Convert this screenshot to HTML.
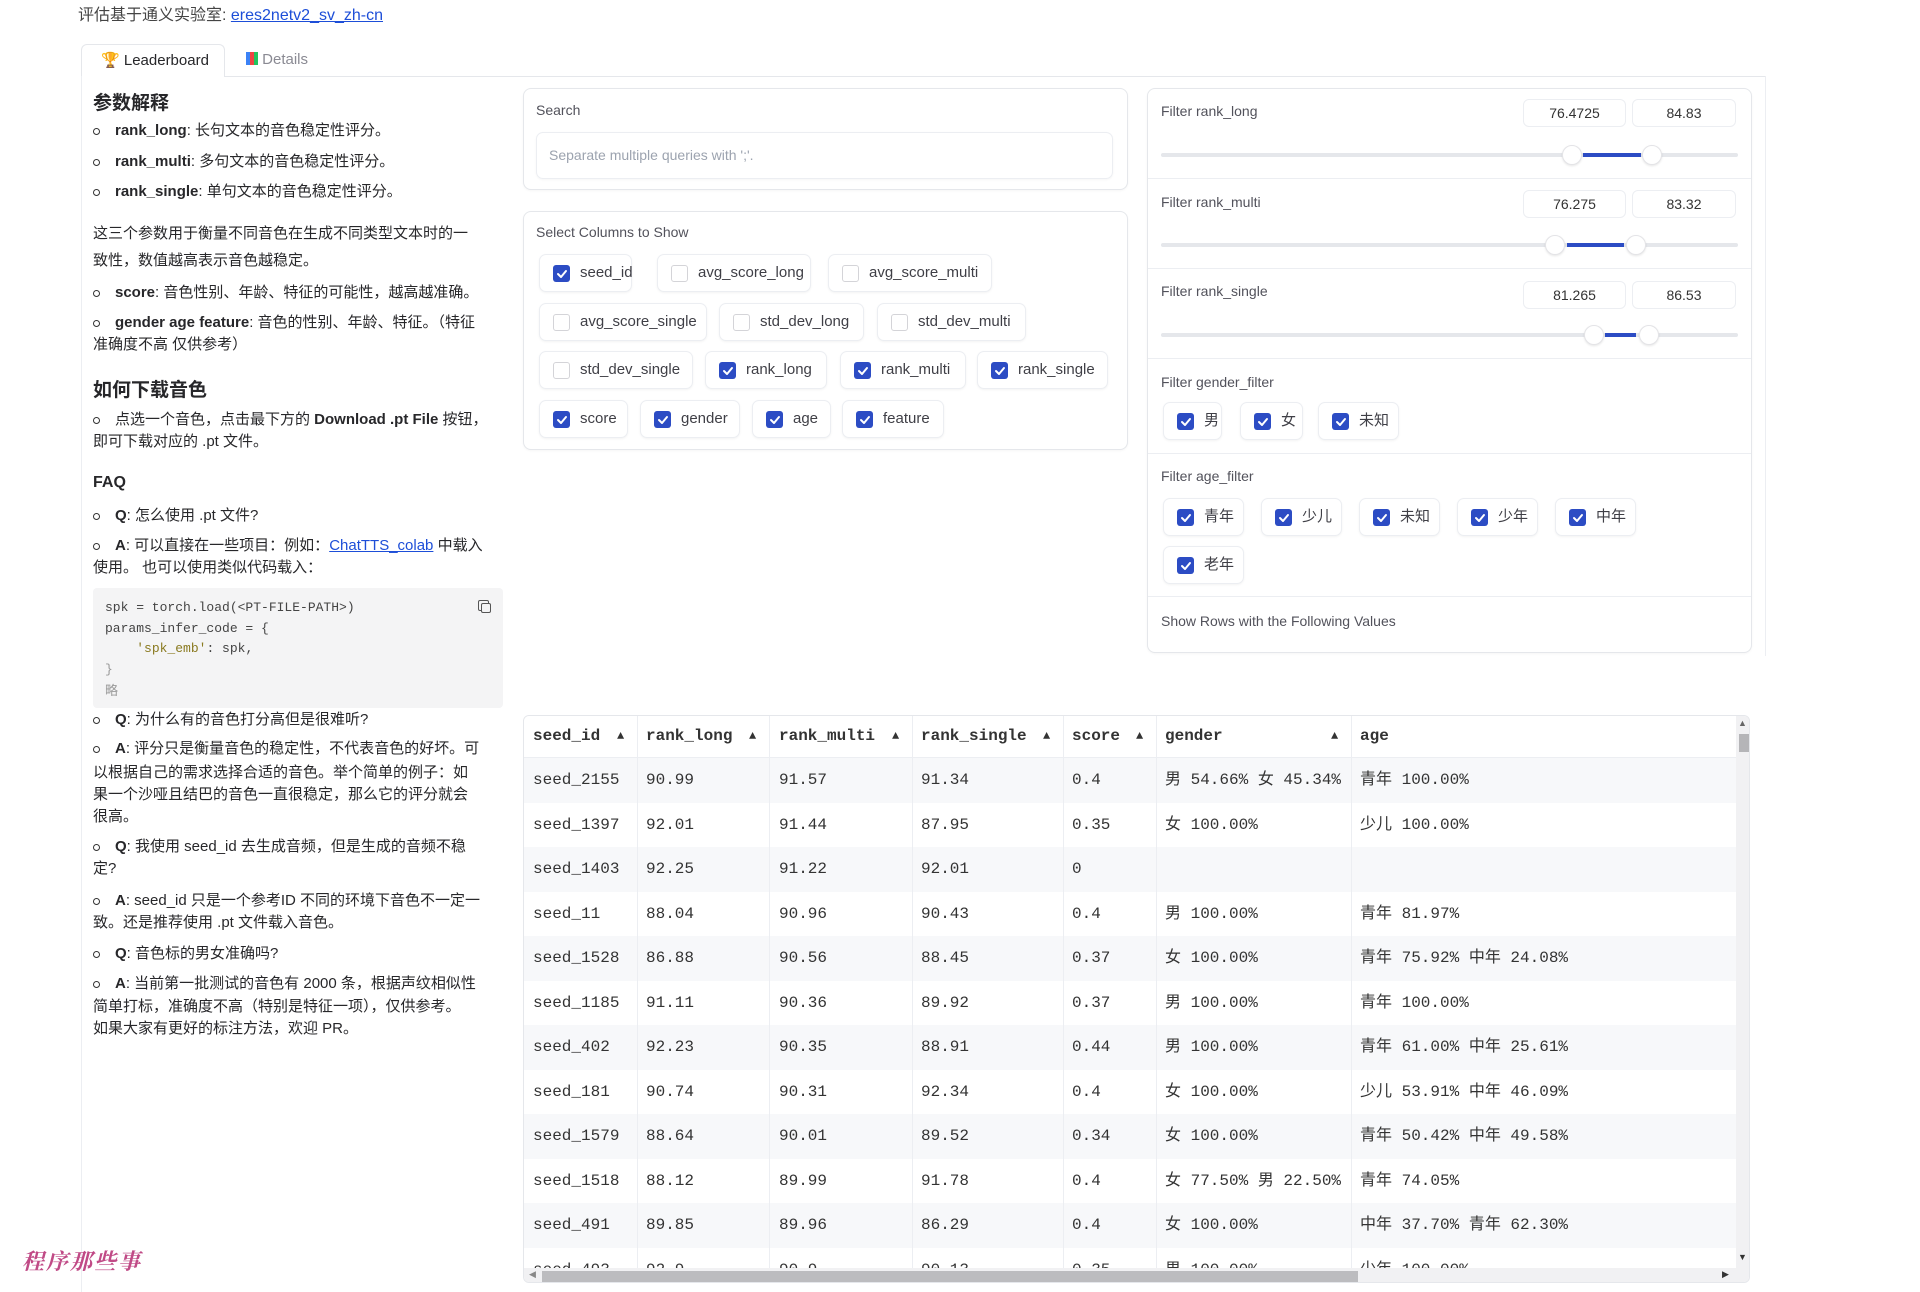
<!DOCTYPE html>
<html><head><meta charset="utf-8"><style>
*{box-sizing:border-box;margin:0;padding:0}
body{width:1920px;height:1292px;background:#fff;position:relative;overflow:hidden;font-family:"Liberation Sans","Noto Sans CJK SC",sans-serif;color:#27272a}
.a{position:absolute;white-space:nowrap}
.t{font-size:15px;line-height:20px}
.b{font-weight:bold}
.bul{position:absolute;width:7px;height:7px;border:1.5px solid #333;border-radius:50%}
a{color:#1d4ed8;text-decoration:underline}
.panel{position:absolute;border:1px solid #e5e7eb;border-radius:8px;background:#fff;box-shadow:0 1px 2px rgba(0,0,0,.04)}
.lbl{font-size:14px;color:#52525b}
.chip{position:absolute;height:38px;border:1px solid #eceef2;border-radius:7px;background:#fff;box-shadow:0 1px 2px rgba(0,0,0,.05);font-size:15px;color:#3f3f46;line-height:36px;padding-left:40px}
.cb{position:absolute;left:13px;top:10px;width:17px;height:17px;border-radius:3px;background:#2c4cc4}
.cb svg{position:absolute;left:2px;top:2px}
.cb.u{background:#fff;border:1px solid #d4d4d8}
.num{position:absolute;height:28px;border:1px solid #eceef2;border-radius:6px;font-size:14px;text-align:center;line-height:26px;color:#333;background:#fff}
.track{position:absolute;height:4px;background:#e5e7eb;border-radius:2px}
.fill{position:absolute;height:4px;background:#2c4cc4}
.hd{position:absolute;width:20px;height:20px;border-radius:50%;background:#fff;border:1px solid #e4e4e7;box-shadow:0 1px 2px rgba(0,0,0,.1)}
.tbl{position:absolute;left:523px;top:715px;width:1227px;height:568px;border:1px solid #e5e7eb;border-radius:6px;overflow:hidden;font-family:"Liberation Mono","Noto Sans CJK SC",monospace;font-size:16px}
.row{position:absolute;left:0;width:1212px;height:44.5px}
.row span{position:absolute;top:12px;height:20px;line-height:20px;white-space:nowrap;color:#333;overflow:visible}
.sep{position:absolute;top:0;width:1px;height:568px;background:#eceef2}
.arr{color:#a1a1aa;font-size:12px}
</style></head><body>

<div class="a" style="left:78px;top:1px;font-size:16px;color:#444">评估基于通义实验室: <a>eres2netv2_sv_zh-cn</a></div>

<div class="a" style="left:81px;top:44px;width:144px;height:33px;border:1px solid #e5e7eb;border-bottom:none;border-radius:6px 6px 0 0;background:#fff"></div>
<div class="a" style="left:101px;top:51px;font-size:15px;color:#27272a"><span style="color:#b45309">🏆</span> Leaderboard</div>
<div class="a" style="left:246px;top:51px;font-size:15px;color:#8a8a93"><span style="display:inline-block;width:12px;height:13px;background:linear-gradient(90deg,#3b82f6 0 33%,#ef4444 33% 66%,#22c55e 66%);vertical-align:-1px"></span> Details</div>
<div class="a" style="left:224px;top:76px;width:1542px;height:1px;background:#e5e7eb"></div>
<div class="a" style="left:81px;top:76px;width:1px;height:1216px;background:#eceef2"></div>
<div class="a" style="left:1765px;top:76px;width:1px;height:580px;background:#eceef2"></div>

<div class="a b" style="left:93px;top:88px;font-size:19px">参数解释</div>
<div class="bul" style="left:93px;top:128px"></div><div class="a t" style="left:115px;top:121px"><b>rank_long</b>: 长句文本的音色稳定性评分。</div>
<div class="bul" style="left:93px;top:159px"></div><div class="a t" style="left:115px;top:152px"><b>rank_multi</b>: 多句文本的音色稳定性评分。</div>
<div class="bul" style="left:93px;top:189px"></div><div class="a t" style="left:115px;top:182px"><b>rank_single</b>: 单句文本的音色稳定性评分。</div>
<div class="a t" style="left:93px;top:224px">这三个参数用于衡量不同音色在生成不同类型文本时的一</div>
<div class="a t" style="left:93px;top:251px">致性，数值越高表示音色越稳定。</div>
<div class="bul" style="left:93px;top:290px"></div><div class="a t" style="left:115px;top:283px"><b>score</b>: 音色性别、年龄、特征的可能性，越高越准确。</div>
<div class="bul" style="left:93px;top:320px"></div><div class="a t" style="left:115px;top:313px"><b>gender age feature</b>: 音色的性别、年龄、特征。（特征</div>
<div class="a t" style="left:93px;top:335px">准确度不高 仅供参考）</div>
<div class="a b" style="left:93px;top:375px;font-size:19px">如何下载音色</div>
<div class="bul" style="left:93px;top:417px"></div><div class="a t" style="left:115px;top:410px">点选一个音色，点击最下方的 <b>Download .pt File</b> 按钮，</div>
<div class="a t" style="left:93px;top:432px">即可下载对应的 .pt 文件。</div>
<div class="a b" style="left:93px;top:474px;font-size:16px">FAQ</div>
<div class="bul" style="left:93px;top:513px"></div><div class="a t" style="left:115px;top:506px"><b>Q</b>: 怎么使用 .pt 文件?</div>
<div class="bul" style="left:93px;top:543px"></div><div class="a t" style="left:115px;top:536px"><b>A</b>: 可以直接在一些项目：例如：<a>ChatTTS_colab</a> 中载入</div>
<div class="a t" style="left:93px;top:558px">使用。 也可以使用类似代码载入：</div>
<div class="a" style="left:93px;top:588px;width:410px;height:120px;background:#f4f4f5;border-radius:4px"></div>
<div class="a" style="left:105px;top:598px;font-family:'Liberation Mono',monospace;font-size:13px;line-height:20.5px;color:#444">spk = torch.load(&lt;PT-FILE-PATH&gt;)<br>params_infer_code = {<br>&nbsp;&nbsp;&nbsp;&nbsp;<span style="color:#8a7a20">'spk_emb'</span>: spk,<br><span style="color:#999">}</span><br><span style="color:#999;font-family:'Noto Sans CJK SC'">略</span></div>
<div class="a" style="left:478px;top:600px;width:11px;height:11px;border:1.5px solid #555;border-radius:2px"></div>
<div class="a" style="left:481px;top:603px;width:10px;height:10px;border:1.5px solid #555;border-radius:2px;background:#f4f4f5"></div>
<div class="bul" style="left:93px;top:717px"></div><div class="a t" style="left:115px;top:710px"><b>Q</b>: 为什么有的音色打分高但是很难听?</div>
<div class="bul" style="left:93px;top:746px"></div><div class="a t" style="left:115px;top:739px"><b>A</b>: 评分只是衡量音色的稳定性，不代表音色的好坏。可</div>
<div class="a t" style="left:93px;top:763px">以根据自己的需求选择合适的音色。举个简单的例子：如</div>
<div class="a t" style="left:93px;top:785px">果一个沙哑且结巴的音色一直很稳定，那么它的评分就会</div>
<div class="a t" style="left:93px;top:807px">很高。</div>
<div class="bul" style="left:93px;top:844px"></div><div class="a t" style="left:115px;top:837px"><b>Q</b>: 我使用 seed_id 去生成音频，但是生成的音频不稳</div>
<div class="a t" style="left:93px;top:859px">定?</div>
<div class="bul" style="left:93px;top:898px"></div><div class="a t" style="left:115px;top:891px"><b>A</b>: seed_id 只是一个参考ID 不同的环境下音色不一定一</div>
<div class="a t" style="left:93px;top:913px">致。还是推荐使用 .pt 文件载入音色。</div>
<div class="bul" style="left:93px;top:951px"></div><div class="a t" style="left:115px;top:944px"><b>Q</b>: 音色标的男女准确吗?</div>
<div class="bul" style="left:93px;top:981px"></div><div class="a t" style="left:115px;top:974px"><b>A</b>: 当前第一批测试的音色有 2000 条，根据声纹相似性</div>
<div class="a t" style="left:93px;top:997px">简单打标，准确度不高（特别是特征一项），仅供参考。</div>
<div class="a t" style="left:93px;top:1019px">如果大家有更好的标注方法，欢迎 PR。</div>
<div class="a" style="left:22px;top:1245px;font-family:'Noto Serif CJK SC',serif;font-size:22px;font-weight:bold;font-style:italic;color:#c04a86;letter-spacing:2px">程序那些事</div>

<div class="panel" style="left:523px;top:88px;width:605px;height:102px"></div>
<div class="a lbl" style="left:536px;top:102px">Search</div>
<div class="a" style="left:536px;top:132px;width:577px;height:47px;border:1px solid #eceef2;border-radius:7px;box-shadow:0 1px 2px rgba(0,0,0,.04)"></div>
<div class="a" style="left:549px;top:147px;font-size:14px;color:#9ca3af">Separate multiple queries with ';'.</div>

<div class="panel" style="left:523px;top:211px;width:605px;height:239px"></div>
<div class="a lbl" style="left:536px;top:224px">Select Columns to Show</div>
<svg width="0" height="0" style="position:absolute"><defs><path id="ck" d="M3 7 L6 10 L11 4" fill="none" stroke="#fff" stroke-width="2" stroke-linecap="round" stroke-linejoin="round"/></defs></svg>
<div class="chip" style="left:539px;top:254px;width:93px"><i class="cb"><svg width="13" height="13"><use href="#ck"/></svg></i>seed_id</div>
<div class="chip" style="left:657px;top:254px;width:154px"><i class="cb u"></i>avg_score_long</div>
<div class="chip" style="left:828px;top:254px;width:164px"><i class="cb u"></i>avg_score_multi</div>
<div class="chip" style="left:539px;top:303px;width:168px"><i class="cb u"></i>avg_score_single</div>
<div class="chip" style="left:719px;top:303px;width:145px"><i class="cb u"></i>std_dev_long</div>
<div class="chip" style="left:877px;top:303px;width:149px"><i class="cb u"></i>std_dev_multi</div>
<div class="chip" style="left:539px;top:351px;width:154px"><i class="cb u"></i>std_dev_single</div>
<div class="chip" style="left:705px;top:351px;width:122px"><i class="cb"><svg width="13" height="13"><use href="#ck"/></svg></i>rank_long</div>
<div class="chip" style="left:840px;top:351px;width:126px"><i class="cb"><svg width="13" height="13"><use href="#ck"/></svg></i>rank_multi</div>
<div class="chip" style="left:977px;top:351px;width:131px"><i class="cb"><svg width="13" height="13"><use href="#ck"/></svg></i>rank_single</div>
<div class="chip" style="left:539px;top:400px;width:89px"><i class="cb"><svg width="13" height="13"><use href="#ck"/></svg></i>score</div>
<div class="chip" style="left:640px;top:400px;width:100px"><i class="cb"><svg width="13" height="13"><use href="#ck"/></svg></i>gender</div>
<div class="chip" style="left:752px;top:400px;width:79px"><i class="cb"><svg width="13" height="13"><use href="#ck"/></svg></i>age</div>
<div class="chip" style="left:842px;top:400px;width:102px"><i class="cb"><svg width="13" height="13"><use href="#ck"/></svg></i>feature</div>

<div class="panel" style="left:1147px;top:88px;width:605px;height:565px"></div>
<div class="a" style="left:1148px;top:178px;width:603px;height:1px;background:#eceef2"></div>
<div class="a" style="left:1148px;top:268px;width:603px;height:1px;background:#eceef2"></div>
<div class="a" style="left:1148px;top:358px;width:603px;height:1px;background:#eceef2"></div>
<div class="a" style="left:1148px;top:453px;width:603px;height:1px;background:#eceef2"></div>
<div class="a" style="left:1148px;top:596px;width:603px;height:1px;background:#eceef2"></div>

<div class="a lbl" style="left:1161px;top:103px">Filter rank_long</div>
<div class="num" style="left:1523px;top:99px;width:103px">76.4725</div><div class="num" style="left:1632px;top:99px;width:104px">84.83</div>
<div class="track" style="left:1161px;top:153px;width:577px"></div><div class="fill" style="left:1583px;top:153px;width:58px"></div>
<div class="hd" style="left:1562px;top:145px"></div><div class="hd" style="left:1642px;top:145px"></div>

<div class="a lbl" style="left:1161px;top:194px">Filter rank_multi</div>
<div class="num" style="left:1523px;top:190px;width:103px">76.275</div><div class="num" style="left:1632px;top:190px;width:104px">83.32</div>
<div class="track" style="left:1161px;top:243px;width:577px"></div><div class="fill" style="left:1567px;top:243px;width:57px"></div>
<div class="hd" style="left:1545px;top:235px"></div><div class="hd" style="left:1626px;top:235px"></div>

<div class="a lbl" style="left:1161px;top:283px">Filter rank_single</div>
<div class="num" style="left:1523px;top:281px;width:103px">81.265</div><div class="num" style="left:1632px;top:281px;width:104px">86.53</div>
<div class="track" style="left:1161px;top:333px;width:577px"></div><div class="fill" style="left:1605px;top:333px;width:31px"></div>
<div class="hd" style="left:1584px;top:325px"></div><div class="hd" style="left:1639px;top:325px"></div>

<div class="a lbl" style="left:1161px;top:374px">Filter gender_filter</div>
<div class="chip" style="left:1163px;top:402px;width:59px"><i class="cb"><svg width="13" height="13"><use href="#ck"/></svg></i>男</div>
<div class="chip" style="left:1240px;top:402px;width:63px"><i class="cb"><svg width="13" height="13"><use href="#ck"/></svg></i>女</div>
<div class="chip" style="left:1318px;top:402px;width:81px"><i class="cb"><svg width="13" height="13"><use href="#ck"/></svg></i>未知</div>

<div class="a lbl" style="left:1161px;top:468px">Filter age_filter</div>
<div class="chip" style="left:1163px;top:498px;width:81px"><i class="cb"><svg width="13" height="13"><use href="#ck"/></svg></i>青年</div>
<div class="chip" style="left:1261px;top:498px;width:81px"><i class="cb"><svg width="13" height="13"><use href="#ck"/></svg></i>少儿</div>
<div class="chip" style="left:1359px;top:498px;width:81px"><i class="cb"><svg width="13" height="13"><use href="#ck"/></svg></i>未知</div>
<div class="chip" style="left:1457px;top:498px;width:81px"><i class="cb"><svg width="13" height="13"><use href="#ck"/></svg></i>少年</div>
<div class="chip" style="left:1555px;top:498px;width:81px"><i class="cb"><svg width="13" height="13"><use href="#ck"/></svg></i>中年</div>
<div class="chip" style="left:1163px;top:546px;width:81px"><i class="cb"><svg width="13" height="13"><use href="#ck"/></svg></i>老年</div>
<div class="a lbl" style="left:1161px;top:613px">Show Rows with the Following Values</div>

<div class="tbl">
 <div style="position:absolute;left:0;top:0;width:1212px;height:42px;border-bottom:1px solid #eceef2;background:#fff"></div>
 <div class="row" style="top:42px;background:#f7f8fa"></div>
 <div class="row" style="top:131px;background:#f7f8fa"></div>
 <div class="row" style="top:220px;background:#f7f8fa"></div>
 <div class="row" style="top:309px;background:#f7f8fa"></div>
 <div class="row" style="top:398px;background:#f7f8fa"></div>
 <div class="row" style="top:487px;background:#f7f8fa"></div>
 <div class="sep" style="left:113px"></div><div class="sep" style="left:245px"></div><div class="sep" style="left:388px"></div><div class="sep" style="left:539px"></div><div class="sep" style="left:632px"></div><div class="sep" style="left:827px"></div>
 <div class="row" style="top:0;font-weight:bold">
  <span style="left:9px;top:10px">seed_id</span><span class="arr" style="left:93px;top:10px">▲</span>
  <span style="left:122px;top:10px">rank_long</span><span class="arr" style="left:225px;top:10px">▲</span>
  <span style="left:255px;top:10px">rank_multi</span><span class="arr" style="left:368px;top:10px">▲</span>
  <span style="left:397px;top:10px">rank_single</span><span class="arr" style="left:519px;top:10px">▲</span>
  <span style="left:548px;top:10px">score</span><span class="arr" style="left:612px;top:10px">▲</span>
  <span style="left:641px;top:10px">gender</span><span class="arr" style="left:807px;top:10px">▲</span>
  <span style="left:836px;top:10px">age</span>
 </div>
 <div class="row" style="top:42px"><span style="left:9px">seed_2155</span><span style="left:122px">90.99</span><span style="left:255px">91.57</span><span style="left:397px">91.34</span><span style="left:548px">0.4</span><span style="left:641px">男 54.66% 女 45.34%</span><span style="left:836px">青年 100.00%</span></div>
 <div class="row" style="top:86.5px"><span style="left:9px">seed_1397</span><span style="left:122px">92.01</span><span style="left:255px">91.44</span><span style="left:397px">87.95</span><span style="left:548px">0.35</span><span style="left:641px">女 100.00%</span><span style="left:836px">少儿 100.00%</span></div>
 <div class="row" style="top:131px"><span style="left:9px">seed_1403</span><span style="left:122px">92.25</span><span style="left:255px">91.22</span><span style="left:397px">92.01</span><span style="left:548px">0</span></div>
 <div class="row" style="top:175.5px"><span style="left:9px">seed_11</span><span style="left:122px">88.04</span><span style="left:255px">90.96</span><span style="left:397px">90.43</span><span style="left:548px">0.4</span><span style="left:641px">男 100.00%</span><span style="left:836px">青年 81.97%</span></div>
 <div class="row" style="top:220px"><span style="left:9px">seed_1528</span><span style="left:122px">86.88</span><span style="left:255px">90.56</span><span style="left:397px">88.45</span><span style="left:548px">0.37</span><span style="left:641px">女 100.00%</span><span style="left:836px">青年 75.92% 中年 24.08%</span></div>
 <div class="row" style="top:264.5px"><span style="left:9px">seed_1185</span><span style="left:122px">91.11</span><span style="left:255px">90.36</span><span style="left:397px">89.92</span><span style="left:548px">0.37</span><span style="left:641px">男 100.00%</span><span style="left:836px">青年 100.00%</span></div>
 <div class="row" style="top:309px"><span style="left:9px">seed_402</span><span style="left:122px">92.23</span><span style="left:255px">90.35</span><span style="left:397px">88.91</span><span style="left:548px">0.44</span><span style="left:641px">男 100.00%</span><span style="left:836px">青年 61.00% 中年 25.61%</span></div>
 <div class="row" style="top:353.5px"><span style="left:9px">seed_181</span><span style="left:122px">90.74</span><span style="left:255px">90.31</span><span style="left:397px">92.34</span><span style="left:548px">0.4</span><span style="left:641px">女 100.00%</span><span style="left:836px">少儿 53.91% 中年 46.09%</span></div>
 <div class="row" style="top:398px"><span style="left:9px">seed_1579</span><span style="left:122px">88.64</span><span style="left:255px">90.01</span><span style="left:397px">89.52</span><span style="left:548px">0.34</span><span style="left:641px">女 100.00%</span><span style="left:836px">青年 50.42% 中年 49.58%</span></div>
 <div class="row" style="top:442.5px"><span style="left:9px">seed_1518</span><span style="left:122px">88.12</span><span style="left:255px">89.99</span><span style="left:397px">91.78</span><span style="left:548px">0.4</span><span style="left:641px">女 77.50% 男 22.50%</span><span style="left:836px">青年 74.05%</span></div>
 <div class="row" style="top:487px"><span style="left:9px">seed_491</span><span style="left:122px">89.85</span><span style="left:255px">89.96</span><span style="left:397px">86.29</span><span style="left:548px">0.4</span><span style="left:641px">女 100.00%</span><span style="left:836px">中年 37.70% 青年 62.30%</span></div>
 <div class="row" style="top:531.5px"><span style="left:9px">seed_493</span><span style="left:122px">92.9</span><span style="left:255px">90.9</span><span style="left:397px">90.13</span><span style="left:548px">0.35</span><span style="left:641px">男 100.00%</span><span style="left:836px">少年 100.00%</span></div>
 <div style="position:absolute;left:1212px;top:0;width:15px;height:568px;background:#f1f1f3"></div>
 <div style="position:absolute;left:1215px;top:18px;width:10px;height:18px;background:#b5b5b8"></div>
 <div style="position:absolute;left:1214px;top:2px;font-size:9px;color:#666;font-family:'Liberation Sans'">▲</div>
 <div style="position:absolute;left:1214px;top:536px;font-size:9px;color:#333;font-family:'Liberation Sans'">▼</div>
 <div style="position:absolute;left:0;top:552px;width:1212px;height:16px;background:#f1f1f3"></div>
 <div style="position:absolute;left:18px;top:555px;width:816px;height:11px;background:#bcbcbf"></div>
 <div style="position:absolute;left:5px;top:553px;font-size:9px;color:#888;font-family:'Liberation Sans'">◀</div>
 <div style="position:absolute;left:1198px;top:553px;font-size:9px;color:#333;font-family:'Liberation Sans'">▶</div>
</div>
</body></html>
